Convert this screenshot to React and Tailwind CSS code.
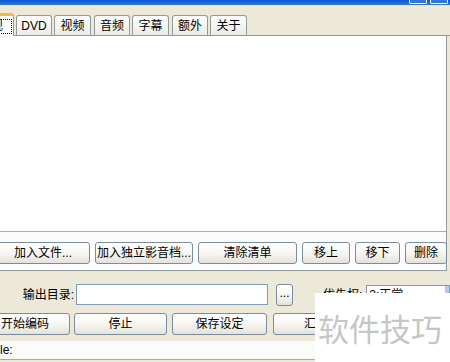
export default function App() {
  const font = { fontFamily: '"Liberation Sans", "Noto Sans CJK SC", sans-serif' };
  const btn =
    "h-[22px] flex items-center justify-center rounded-[3px] border border-[#7b8c9d] bg-gradient-to-b from-[#ffffff] via-[#f6f6f3] to-[#e4e2da] text-[12px] text-black shrink-0";
  const tab =
    "h-[20px] flex items-center justify-center border border-b-0 border-[#919b9c] rounded-t-[3px] bg-gradient-to-b from-[#ffffff] to-[#ecebe5] text-[12px] shrink-0";
  return (
    <div className="relative w-[450px] h-[362px] overflow-hidden bg-[#ece9d8] flex flex-col text-black" style={font}>
      {/* title bar remnant */}
      <div className="h-[5px] bg-gradient-to-b from-[#0a57d6] to-[#2a7af0] flex justify-end gap-[3px] pr-[2px] shrink-0">
        <div className="w-[18px] h-[4px] border border-t-0 border-white rounded-b-[2px] bg-[#2f74ee]" />
        <div className="w-[18px] h-[4px] border border-t-0 border-white rounded-b-[2px] bg-[#2f74ee]" />
      </div>
      {/* tabs */}
      <div className="h-[31px] flex items-end pl-0 shrink-0 border-b border-[#919b9c]">
        <div className="h-[23px] w-[44px] ml-[-30px] flex items-center justify-end pr-[1px] border border-b-0 border-[#919b9c] border-t-[3px] border-t-[#f5b94a] rounded-t-[3px] bg-white mb-[-1px] text-[12px] shrink-0 overflow-hidden">
          <span className="border border-dotted border-black pl-[1px] pr-[8px] leading-[13px] whitespace-nowrap">常规</span>
        </div>
        <div className={tab + " w-[36px] ml-[2px]"}>DVD</div>
        <div className={tab + " w-[37px] ml-[2px]"}>视频</div>
        <div className={tab + " w-[36px] ml-[3px]"}>音频</div>
        <div className={tab + " w-[37px] ml-[2px]"}>字幕</div>
        <div className={tab + " w-[36px] ml-[3px]"}>额外</div>
        <div className={tab + " w-[37px] ml-[2px]"}>关于</div>
      </div>
      {/* tab panel */}
      <div className="h-[235px] bg-[#fcfcfe] flex flex-col shrink-0 border-b border-[#919b9c] border-r border-r-[#919b9c] mr-[3px]">
        <div className="h-[196px] bg-white border-b border-[#a5acb5] shrink-0" />
        <div className="flex items-center mt-[10px] pl-0">
          <div className={btn + " w-[94px] ml-[-4px]"}>加入文件...</div>
          <div className={btn + " w-[98px] ml-[5px]"}>加入独立影音档...</div>
          <div className={btn + " w-[99px] ml-[5px]"}>清除清单</div>
          <div className={btn + " w-[48px] ml-[5px]"}>移上</div>
          <div className={btn + " w-[45px] ml-[5px]"}>移下</div>
          <div className={btn + " w-[42px] ml-[5px]"}>删除</div>
        </div>
      </div>
      {/* output row */}
      <div className="flex items-center mt-[13px] h-[21px] shrink-0">
        <div className="w-[76px] text-right text-[12px] pr-[2px]">输出目录:</div>
        <div className="w-[192px] h-[21px] bg-white border border-[#7f9db9] shrink-0" />
        <div className={btn + " w-[17px] h-[18px] ml-[8px] text-[9px] text-[#666] items-end pb-[3px]"}>...</div>
        <div className="ml-[30px] text-[12px]">优先权:</div>
        <div className="ml-[4px] flex-1 h-[20px] bg-white border border-[#7f9db9] flex items-center pl-[2px] text-[12px]">
          2:正常
          <div className="ml-auto w-[4px] h-full bg-[#b5cbf5]" />
        </div>
      </div>
      {/* action row */}
      <div className="flex items-center mt-[8px] shrink-0">
        <div className={btn + " w-[74px] ml-[-4px] justify-start pl-[4px] h-[21px]"}>开始编码</div>
        <div className={btn + " w-[93px] ml-[4px] h-[21px]"}>停止</div>
        <div className={btn + " w-[95px] ml-[5px] h-[21px]"}>保存设定</div>
        <div className={btn + " w-[95px] ml-[6px] h-[21px] justify-start pl-[30px]"}>汇出</div>
      </div>
      {/* status */}
      <div className="mt-[6px] h-[19px] w-[318px] bg-[#fbfbf9] border-b border-[#a9a9a9] flex items-center text-[12px] shrink-0">
        le:
      </div>
      {/* watermark overlay */}
      <div className="absolute left-[315px] top-[293px] w-[135px] h-[69px] bg-white flex items-center pl-[3px] text-[31px] text-[#c6c6c6] leading-none" style={{ fontFamily: '"Noto Sans CJK SC", sans-serif' }}>
        软件技巧
      </div>
    </div>
  );
}
